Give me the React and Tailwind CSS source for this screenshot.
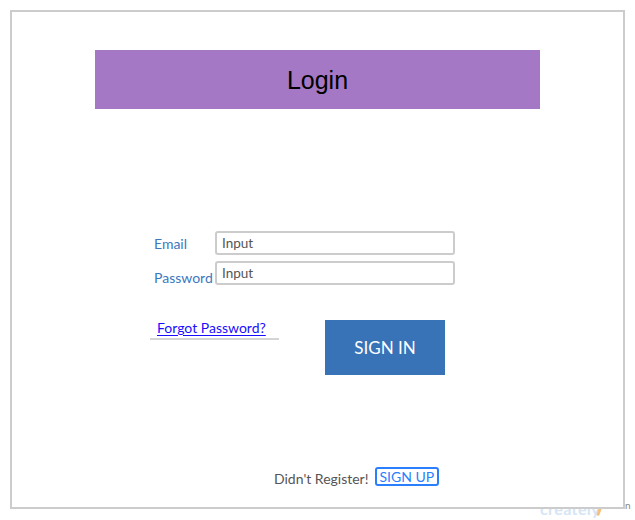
export default function App() {
  return (
    <div className="relative h-[520px] w-[635px] overflow-hidden bg-white font-['Lato','Liberation_Sans',sans-serif]">
      {/* faint watermark peeking below the frame */}
      <div className="absolute left-[540px] top-[497px] text-[16px] font-bold tracking-wide text-[#d5e5f5]">
        creately
      </div>
      <div className="absolute left-[598px] top-[505px] h-[11px] w-[3px] rotate-[20deg] rounded bg-[#f6c07f]"></div>
      <div className="absolute left-[625px] top-[498px] text-[10px] text-[#888]">n</div>

      <div className="relative z-10 ml-[10px] mt-[10px] h-[499px] w-[615px] border-2 border-[#cccccc] bg-white">
        <div className="ml-[83px] mt-[38px] flex h-[59px] w-[445px] items-center justify-center bg-[#a478c4] pt-[2px]">
          <span className="font-['Liberation_Sans',Arial,sans-serif] text-[25px] leading-none text-black">Login</span>
        </div>

        <div className="ml-[142px] mt-[122px]">
          <div className="flex">
            <label className="flex w-[61px] items-center text-[14px] text-[#3b78c0]">Email</label>
            <div className="flex h-[24px] w-[240px] items-center rounded-[3px] border-2 border-[#cccccc] px-[5px] text-[13.5px] text-[#555]">
              Input
            </div>
          </div>
          <div className="mt-[6px] flex">
            <label className="w-[61px] pt-[9px] text-[14px] leading-[16px] text-[#3b78c0]">Password</label>
            <div className="flex h-[24px] w-[240px] items-center rounded-[3px] border-2 border-[#cccccc] px-[5px] text-[13.5px] text-[#555]">
              Input
            </div>
          </div>
        </div>

        <div className="ml-[138px] mt-[34px] flex items-start">
          <div className="w-[129px] border-b-2 border-[#d4d4d4] pb-[2px] pl-[7px] text-[14px] leading-[16px]">
            <a className="text-[#1a0dff] underline underline-offset-2">Forgot Password?</a>
          </div>
          <button className="ml-[46px] h-[55px] w-[120px] bg-[#3873b8] text-[17px] text-white" type="button">
            SIGN IN
          </button>
        </div>

        <div className="ml-[262px] mt-[89px] flex items-center">
          <span className="mt-[4px] text-[14px] text-[#555]">Didn't Register!</span>
          <span className="ml-[6px] flex h-[19px] items-center rounded-[3px] border-2 border-[#2a7fff] px-[3px] text-[14px] text-[#2a7fff]">
            SIGN UP
          </span>
        </div>
      </div>
    </div>
  );
}
